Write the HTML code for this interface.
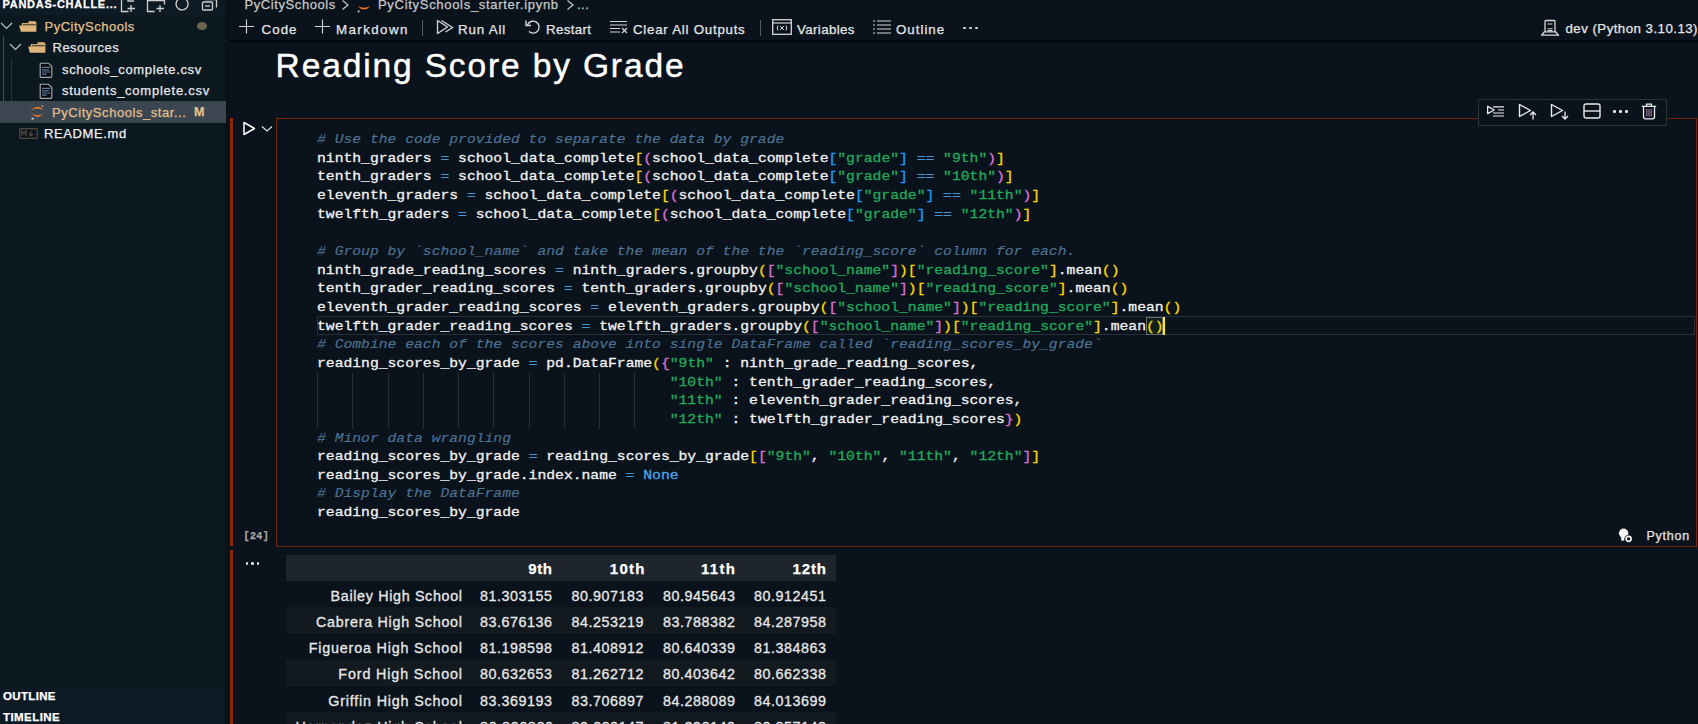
<!DOCTYPE html>
<html><head><meta charset="utf-8"><style>
html,body{margin:0;padding:0;width:1698px;height:724px;overflow:hidden;background:#0a131b;}
.code{font-family:'Liberation Mono', monospace;font-size:13.5px;line-height:18.65px;color:#f2f2f2;white-space:pre;transform:scaleX(1.08840);transform-origin:0 0;-webkit-text-stroke:0.3px currentColor}
.i{color:#f2f2f2}.o{color:#4a94d2}.s{color:#21aa5c}.c{color:#4f7597}.b1{color:#ffd700}.b2{color:#da70d6}.b3{color:#179fff}.k{color:#4aa3e8}
.c{font-style:italic;-webkit-text-stroke:0.1px currentColor}
</style></head><body>
<div style="position:absolute;left:0px;top:0px;width:225px;height:724px;background:#0c1820"></div>
<div style="position:absolute;left:225px;top:0px;width:5px;height:724px;background:#09121a"></div>
<div style="position:absolute;left:0px;top:0px;width:225px;height:14.5px;background:#0e1a24"></div>
<div id="t0" style="position:absolute;left:2.50px;top:-1.71px;font:700 11px/13.2px 'Liberation Sans', sans-serif;color:#ffffff;white-space:pre;-webkit-text-stroke:0.25px currentColor;letter-spacing:0.733px;">PANDAS-CHALLE...</div>
<svg style="position:absolute;left:120px;top:-4px;" width="18" height="17" viewBox="0 0 18 17" fill="none"><path d="M1.5 3v12.5h7" stroke="#d0d0d0" stroke-width="1.3"/><path d="M11 9v7M7.5 12.5h7.5" stroke="#d0d0d0" stroke-width="1.3"/><path d="M8 1v4h6" stroke="#d0d0d0" stroke-width="1.3"/></svg>
<svg style="position:absolute;left:146px;top:-4px;" width="20" height="17" viewBox="0 0 20 17" fill="none"><path d="M1.5 2v13.5h7" stroke="#d0d0d0" stroke-width="1.3"/><path d="M1.5 4.5h17v4" stroke="#d0d0d0" stroke-width="1.3"/><path d="M14 9v7M10.5 12.5h7.5" stroke="#d0d0d0" stroke-width="1.3"/></svg>
<svg style="position:absolute;left:174px;top:-5px;" width="17" height="16" viewBox="0 0 17 16" fill="none"><path d="M4 4.5 A6 6 0 1 0 9 3" stroke="#d0d0d0" stroke-width="1.3"/><path d="M9 0v4h4" stroke="#d0d0d0" stroke-width="1.3"/></svg>
<svg style="position:absolute;left:201px;top:-5px;" width="18" height="16" viewBox="0 0 18 16" fill="none"><rect x="1.5" y="7" width="10" height="8" rx="1" stroke="#d0d0d0" stroke-width="1.3"/><path d="M4.5 4.5h11v8" stroke="#d0d0d0" stroke-width="1.3"/><path d="M4 11h5" stroke="#d0d0d0" stroke-width="1.3"/></svg>
<svg style="position:absolute;left:0px;top:22px;" width="13" height="8" viewBox="0 0 13 8" fill="none"><path d="M1 1l5.5 5.5L12 1" stroke="#bcc4cc" stroke-width="1.15"/></svg>
<svg style="position:absolute;left:19px;top:21px;" width="18" height="11" viewBox="0 0 18 11" fill="none"><path d="M9.5 0.2h6.3q1.5 0 1.5 1.5v2.3h-7.8z" fill="#dcb67a"/><path d="M2.8 2h14.5v2.5H2.8z" fill="#dcb67a"/><path d="M4 3.4h12.8" stroke="#4a3c28" stroke-width="0.9"/><path d="M0.2 4.4H17.4V10.8H1.8z" fill="#dcb67a"/></svg>
<div id="t1" style="position:absolute;left:44.50px;top:18.60px;font:400 13px/15.6px 'Liberation Sans', sans-serif;color:#e2c08d;white-space:pre;-webkit-text-stroke:0.25px currentColor;letter-spacing:0.500px;">PyCitySchools</div>
<div style="position:absolute;left:197px;top:22px;width:9.5px;height:8px;background:#6b6350;border-radius:50%"></div>
<div style="position:absolute;left:2.5px;top:36px;width:1px;height:86.5px;background:#4b5057"></div>
<svg style="position:absolute;left:9px;top:43px;" width="13" height="8" viewBox="0 0 13 8" fill="none"><path d="M1 1l5.5 5.5L12 1" stroke="#bcc4cc" stroke-width="1.15"/></svg>
<svg style="position:absolute;left:28px;top:42px;" width="18" height="11" viewBox="0 0 18 11" fill="none"><path d="M9.5 0.2h6.3q1.5 0 1.5 1.5v2.3h-7.8z" fill="#dcb67a"/><path d="M2.8 2h14.5v2.5H2.8z" fill="#dcb67a"/><path d="M4 3.4h12.8" stroke="#4a3c28" stroke-width="0.9"/><path d="M0.2 4.4H17.4V10.8H1.8z" fill="#dcb67a"/></svg>
<div id="t2" style="position:absolute;left:52.50px;top:40.30px;font:400 13px/15.6px 'Liberation Sans', sans-serif;color:#e4e4e4;white-space:pre;-webkit-text-stroke:0.25px currentColor;letter-spacing:0.500px;">Resources</div>
<div style="position:absolute;left:11px;top:58px;width:1px;height:43px;background:#2b3440"></div>
<svg style="position:absolute;left:38.5px;top:61.5px;" width="15" height="16" viewBox="0 0 15 16" fill="none"><path d="M1.2 2.2q0-1 1-1h7.3l3.3 3.3v9.8q0 1-1 1H2.2q-1 0-1-1z" stroke="#a4a8ac" stroke-width="1.15" fill="#05080c"/><path d="M3 5.3h8.3M3 7.9h7.2M3 10h8.3M3 12.2h4.8" stroke="#5a7898" stroke-width="1.2"/></svg>
<div id="t3" style="position:absolute;left:62.00px;top:61.90px;font:400 13px/15.6px 'Liberation Sans', sans-serif;color:#e8e8e8;white-space:pre;-webkit-text-stroke:0.25px currentColor;letter-spacing:0.632px;">schools_complete.csv</div>
<svg style="position:absolute;left:38.5px;top:83.0px;" width="15" height="16" viewBox="0 0 15 16" fill="none"><path d="M1.2 2.2q0-1 1-1h7.3l3.3 3.3v9.8q0 1-1 1H2.2q-1 0-1-1z" stroke="#a4a8ac" stroke-width="1.15" fill="#05080c"/><path d="M3 5.3h8.3M3 7.9h7.2M3 10h8.3M3 12.2h4.8" stroke="#5a7898" stroke-width="1.2"/></svg>
<div id="t4" style="position:absolute;left:62.00px;top:83.40px;font:400 13px/15.6px 'Liberation Sans', sans-serif;color:#e8e8e8;white-space:pre;-webkit-text-stroke:0.25px currentColor;letter-spacing:0.750px;">students_complete.csv</div>
<div style="position:absolute;left:0px;top:101px;width:225.5px;height:21.5px;background:#3b4651"></div>
<svg style="position:absolute;left:30px;top:102px;" width="15" height="19" viewBox="0 0 15 19" fill="none"><path d="M1.5 8.2Q7.5 1.5 13.5 8.2Q7.5 4.8 1.5 8.2Z" fill="#f37726"/><path d="M1.5 11.6Q7.5 18.3 13.5 11.6Q7.5 15 1.5 11.6Z" fill="#f37726"/><circle cx="2.6" cy="16.6" r="1.2" fill="#c0c0c0"/><circle cx="12.4" cy="3.9" r="1" fill="#9a9a9a"/><circle cx="1.2" cy="5.2" r="0.6" fill="#707070"/></svg>
<div id="t5" style="position:absolute;left:52.00px;top:104.90px;font:400 13px/15.6px 'Liberation Sans', sans-serif;color:#e2c08d;white-space:pre;-webkit-text-stroke:0.25px currentColor;letter-spacing:0.550px;">PyCitySchools_star...</div>
<div id="t6" style="position:absolute;left:194.00px;top:105.37px;font:700 12.5px/15.0px 'Liberation Sans', sans-serif;color:#e2c08d;white-space:pre;-webkit-text-stroke:0.25px currentColor;">M</div>
<svg style="position:absolute;left:19px;top:128px;" width="19" height="11" viewBox="0 0 19 11" fill="none"><rect x="0.7" y="0.7" width="17.6" height="9.6" rx="1" stroke="#54483a" stroke-width="1.2"/><path d="M3 8V3l2 2.5L7 3v5M12 3v5M10 6l2 2 2-2" stroke="#54483a" stroke-width="1.2"/></svg>
<div id="t7" style="position:absolute;left:44.00px;top:126.30px;font:400 13px/15.6px 'Liberation Sans', sans-serif;color:#f0f0f0;white-space:pre;-webkit-text-stroke:0.25px currentColor;letter-spacing:0.625px;">README.md</div>
<div style="position:absolute;left:0px;top:685px;width:225px;height:39px;background:#0d1a24"></div>
<div id="t8" style="position:absolute;left:3.00px;top:689.52px;font:700 11.5px/13.8px 'Liberation Sans', sans-serif;color:#ffffff;white-space:pre;-webkit-text-stroke:0.25px currentColor;letter-spacing:0.333px;">OUTLINE</div>
<div id="t9" style="position:absolute;left:3.00px;top:711.12px;font:700 11.5px/13.8px 'Liberation Sans', sans-serif;color:#ffffff;white-space:pre;-webkit-text-stroke:0.25px currentColor;letter-spacing:0.429px;">TIMELINE</div>
<div style="position:absolute;left:230px;top:0px;width:1468px;height:724px;background:#0a131b"></div>
<div id="t10" style="position:absolute;left:244.50px;top:-2.90px;font:400 13px/15.6px 'Liberation Sans', sans-serif;color:#c8c8c8;white-space:pre;-webkit-text-stroke:0.25px currentColor;letter-spacing:0.583px;">PyCitySchools</div>
<svg style="position:absolute;left:341px;top:-2px;" width="9" height="13" viewBox="0 0 9 13" fill="none"><path d="M1.5 2.5l5.5 4.5-5.5 4.5" stroke="#c8c8c8" stroke-width="1.2"/></svg>
<svg style="position:absolute;left:355.5px;top:-2.5px;" width="16" height="16" viewBox="0 0 16 16" fill="none"><path d="M1.5 1.5Q8 -5.5 14.5 1.5Q8 -1.8 1.5 1.5Z" fill="#f37726"/><path d="M1.5 8Q8 15.2 14.5 8Q8 11.6 1.5 8Z" fill="#f37726"/><circle cx="2.6" cy="13.4" r="1.1" fill="#b8b8b8"/></svg>
<div id="t11" style="position:absolute;left:378.00px;top:-2.90px;font:400 13px/15.6px 'Liberation Sans', sans-serif;color:#c8c8c8;white-space:pre;-webkit-text-stroke:0.25px currentColor;letter-spacing:0.700px;">PyCitySchools_starter.ipynb</div>
<svg style="position:absolute;left:566px;top:-2px;" width="9" height="13" viewBox="0 0 9 13" fill="none"><path d="M1.5 2.5l5.5 4.5-5.5 4.5" stroke="#c8c8c8" stroke-width="1.2"/></svg>
<div id="t12" style="position:absolute;left:577.00px;top:-2.90px;font:400 13px/15.6px 'Liberation Sans', sans-serif;color:#c8c8c8;white-space:pre;-webkit-text-stroke:0.25px currentColor;letter-spacing:0.500px;">...</div>
<svg style="position:absolute;left:238px;top:19px;" width="17" height="15" viewBox="0 0 17 15" fill="none"><path d="M8.5 0.5v14M1 7.5h15" stroke="#d8d8d8" stroke-width="1.1"/></svg>
<div id="t13" style="position:absolute;left:261.50px;top:21.61px;font:400 13.3px/15.96px 'Liberation Sans', sans-serif;color:#e6e6e6;white-space:pre;-webkit-text-stroke:0.25px currentColor;letter-spacing:1.067px;">Code</div>
<svg style="position:absolute;left:314px;top:19px;" width="17" height="15" viewBox="0 0 17 15" fill="none"><path d="M8.5 0.5v14M1 7.5h15" stroke="#d8d8d8" stroke-width="1.1"/></svg>
<div id="t14" style="position:absolute;left:336.00px;top:21.61px;font:400 13.3px/15.96px 'Liberation Sans', sans-serif;color:#e6e6e6;white-space:pre;-webkit-text-stroke:0.25px currentColor;letter-spacing:1.429px;">Markdown</div>
<div style="position:absolute;left:422px;top:20px;width:1px;height:16px;background:#555a60"></div>
<svg style="position:absolute;left:436px;top:19px;" width="18" height="16" viewBox="0 0 18 16" fill="none"><path d="M1.5 1.5v13l10-6.5z" stroke="#d8d8d8" stroke-width="1.3" stroke-linejoin="round"/><path d="M5.5 1.5l11 7-7 4.5" stroke="#d8d8d8" stroke-width="1.3"/></svg>
<div id="t15" style="position:absolute;left:458.00px;top:21.61px;font:400 13.3px/15.96px 'Liberation Sans', sans-serif;color:#e6e6e6;white-space:pre;-webkit-text-stroke:0.25px currentColor;letter-spacing:0.833px;">Run All</div>
<svg style="position:absolute;left:524px;top:19px;" width="17" height="16" viewBox="0 0 17 16" fill="none"><path d="M3.5 6 A6 6 0 1 1 5 12.5" stroke="#d8d8d8" stroke-width="1.4"/><path d="M2 1.5v5h5" stroke="#d8d8d8" stroke-width="1.4"/></svg>
<div id="t16" style="position:absolute;left:546.00px;top:21.61px;font:400 13.3px/15.96px 'Liberation Sans', sans-serif;color:#e6e6e6;white-space:pre;-webkit-text-stroke:0.25px currentColor;letter-spacing:0.333px;">Restart</div>
<svg style="position:absolute;left:610px;top:20px;" width="18" height="15" viewBox="0 0 18 15" fill="none"><path d="M0 1.5h17M0 5h17M0 8.5h10M0 12h10" stroke="#d8d8d8" stroke-width="1.2"/><path d="M12 8l5 5M17 8l-5 5" stroke="#d8d8d8" stroke-width="1.2"/></svg>
<div id="t17" style="position:absolute;left:633.00px;top:21.61px;font:400 13.3px/15.96px 'Liberation Sans', sans-serif;color:#e6e6e6;white-space:pre;-webkit-text-stroke:0.25px currentColor;letter-spacing:0.750px;">Clear All Outputs</div>
<div style="position:absolute;left:760px;top:20px;width:1px;height:16px;background:#555a60"></div>
<svg style="position:absolute;left:772px;top:19px;" width="20" height="16" viewBox="0 0 20 16" fill="none"><rect x="0.7" y="0.7" width="18.6" height="14.6" stroke="#d8d8d8" stroke-width="1.3"/><path d="M0.7 4h18.6" stroke="#d8d8d8" stroke-width="1.2"/><path d="M6 6.5q-1.5 2.5 0 5M14 6.5q1.5 2.5 0 5M8 7l4 4M12 7l-4 4" stroke="#d8d8d8" stroke-width="1"/></svg>
<div id="t18" style="position:absolute;left:797.00px;top:21.61px;font:400 13.3px/15.96px 'Liberation Sans', sans-serif;color:#e6e6e6;white-space:pre;-webkit-text-stroke:0.25px currentColor;letter-spacing:0.375px;">Variables</div>
<svg style="position:absolute;left:873px;top:19px;" width="18" height="16" viewBox="0 0 18 16" fill="none"><path d="M0 2h2M0 6h2M0 10h2M0 14h2M4 2h14M4 6h14M4 10h14M4 14h14" stroke="#d8d8d8" stroke-width="1.2"/></svg>
<div id="t19" style="position:absolute;left:896.00px;top:21.61px;font:400 13.3px/15.96px 'Liberation Sans', sans-serif;color:#e6e6e6;white-space:pre;-webkit-text-stroke:0.25px currentColor;letter-spacing:1.000px;">Outline</div>
<div style="position:absolute;left:963px;top:26.5px;width:2.5px;height:2.5px;background:#d8d8d8;border-radius:50%"></div>
<div style="position:absolute;left:969px;top:26.5px;width:2.5px;height:2.5px;background:#d8d8d8;border-radius:50%"></div>
<div style="position:absolute;left:975px;top:26.5px;width:2.5px;height:2.5px;background:#d8d8d8;border-radius:50%"></div>
<svg style="position:absolute;left:1540px;top:19px;" width="20" height="17" viewBox="0 0 20 17" fill="none"><path d="M5 13V2.5q0-1 1-1h8q1 0 1 1V13" stroke="#d8d8d8" stroke-width="1.3"/><path d="M7.5 5h5M7.5 9.8h5M7.5 11.6h5" stroke="#d8d8d8" stroke-width="1.1"/><path d="M4.5 12.8L1.5 16.2H18.5L15.5 12.8z" stroke="#d8d8d8" stroke-width="1.3" stroke-linejoin="round"/></svg>
<div id="t20" style="position:absolute;left:1565.50px;top:20.71px;font:400 13.3px/15.96px 'Liberation Sans', sans-serif;color:#e6e6e6;white-space:pre;-webkit-text-stroke:0.25px currentColor;letter-spacing:0.45px">dev (Python 3.10.13)</div>
<div style="position:absolute;left:230px;top:40px;width:1468px;height:2px;background:#04080c"></div>
<div id="t21" style="position:absolute;left:275.60px;top:46.19px;font:400 33.5px/40.2px 'Liberation Sans', sans-serif;color:#ffffff;white-space:pre;-webkit-text-stroke:0.45px currentColor;letter-spacing:1.867px;">Reading Score by Grade</div>
<div style="position:absolute;left:230px;top:118px;width:3px;height:428px;background:#8c2700"></div>
<div style="position:absolute;left:230px;top:550px;width:3px;height:174px;background:#8c2700"></div>
<div style="position:absolute;left:276px;top:118px;width:1420.5px;height:429px;border:1px solid #742606;box-sizing:border-box"></div>
<svg style="position:absolute;left:242px;top:121px;" width="15" height="15" viewBox="0 0 15 15" fill="none"><path d="M2 1.5v12l10.5-6z" stroke="#ffffff" stroke-width="1.5" stroke-linejoin="round"/></svg>
<svg style="position:absolute;left:261px;top:125px;" width="12" height="8" viewBox="0 0 12 8" fill="none"><path d="M1 1.5l5 4.5 5-4.5" stroke="#e0e0e0" stroke-width="1.2"/></svg>
<div style="position:absolute;left:1478px;top:99px;width:188.5px;height:27px;background:#0a131b;border:1px solid #2c3238;box-sizing:border-box"></div>
<svg style="position:absolute;left:1486px;top:104px;" width="19" height="14" viewBox="0 0 19 14" fill="none"><path d="M1.6 2.4v7.2l6.6-3.6z" stroke="#ececec" stroke-width="1.25" stroke-linejoin="round"/><path d="M7 2.8h11M12 6h6M7 9h11M7 12h11" stroke="#ececec" stroke-width="1.2"/></svg>
<svg style="position:absolute;left:1518px;top:103px;" width="20" height="17" viewBox="0 0 20 17" fill="none"><path d="M1.5 1.5v12l11-6z" stroke="#ececec" stroke-width="1.4" stroke-linejoin="round"/><path d="M15 16.5v-7M12 12l3-3 3 3" stroke="#ececec" stroke-width="1.3"/></svg>
<svg style="position:absolute;left:1550px;top:103px;" width="20" height="17" viewBox="0 0 20 17" fill="none"><path d="M1.5 1.5v12l11-6z" stroke="#ececec" stroke-width="1.4" stroke-linejoin="round"/><path d="M15 8.5v7M12 13l3 3 3-3" stroke="#ececec" stroke-width="1.3"/></svg>
<svg style="position:absolute;left:1583px;top:103px;" width="18" height="16" viewBox="0 0 18 16" fill="none"><rect x="1" y="1" width="16" height="14" rx="2" stroke="#ececec" stroke-width="1.4"/><path d="M1 8h16" stroke="#ececec" stroke-width="1.4"/></svg>
<div style="position:absolute;left:1613px;top:110px;width:2.5px;height:2.5px;background:#ececec;border-radius:50%"></div>
<div style="position:absolute;left:1619px;top:110px;width:2.5px;height:2.5px;background:#ececec;border-radius:50%"></div>
<div style="position:absolute;left:1625px;top:110px;width:2.5px;height:2.5px;background:#ececec;border-radius:50%"></div>
<svg style="position:absolute;left:1641px;top:103px;" width="16" height="17" viewBox="0 0 16 17" fill="none"><path d="M0.8 3.3h14.4M5.5 3V1.2h5V3" stroke="#ececec" stroke-width="1.3"/><path d="M2.5 3.8v10q0 2 2 2h7q2 0 2-2v-10" stroke="#ececec" stroke-width="1.3"/><path d="M5.8 6v7.5M8 6v7.5M10.2 6v7.5" stroke="#c89ad0" stroke-width="0.9"/></svg>
<div style="position:absolute;left:317px;top:316px;width:1378px;height:18.5px;border:1px solid #25303a;box-sizing:border-box"></div>
<div style="position:absolute;left:317px;top:373.45px;width:1px;height:55.949999999999996px;background:#282d33"></div>
<div style="position:absolute;left:352px;top:373.45px;width:1px;height:55.949999999999996px;background:#282d33"></div>
<div style="position:absolute;left:388px;top:373.45px;width:1px;height:55.949999999999996px;background:#282d33"></div>
<div style="position:absolute;left:423px;top:373.45px;width:1px;height:55.949999999999996px;background:#282d33"></div>
<div style="position:absolute;left:458px;top:373.45px;width:1px;height:55.949999999999996px;background:#282d33"></div>
<div style="position:absolute;left:493px;top:373.45px;width:1px;height:55.949999999999996px;background:#282d33"></div>
<div style="position:absolute;left:529px;top:373.45px;width:1px;height:55.949999999999996px;background:#282d33"></div>
<div style="position:absolute;left:564px;top:373.45px;width:1px;height:55.949999999999996px;background:#282d33"></div>
<div style="position:absolute;left:599px;top:373.45px;width:1px;height:55.949999999999996px;background:#282d33"></div>
<div style="position:absolute;left:634px;top:373.45px;width:1px;height:55.949999999999996px;background:#282d33"></div>
<div style="position:absolute;left:1145.7040000000002px;top:316.5px;width:17.632px;height:18px;border:1px solid #6b6b6b;background:#0c2118;box-sizing:border-box"></div>
<div style="position:absolute;left:1162.836px;top:316.5px;width:2px;height:18px;background:#fff200"></div>
<pre class="code" style="position:absolute;left:317px;top:131px;margin:0"><span class="c"># Use the code provided to separate the data by grade</span>
<span class="i">ninth_graders</span><span class="o"> = </span><span class="i">school_data_complete</span><span class="b1">[</span><span class="b2">(</span><span class="i">school_data_complete</span><span class="b3">[</span><span class="s">&quot;grade&quot;</span><span class="b3">]</span><span class="o"> == </span><span class="s">&quot;9th&quot;</span><span class="b2">)</span><span class="b1">]</span>
<span class="i">tenth_graders</span><span class="o"> = </span><span class="i">school_data_complete</span><span class="b1">[</span><span class="b2">(</span><span class="i">school_data_complete</span><span class="b3">[</span><span class="s">&quot;grade&quot;</span><span class="b3">]</span><span class="o"> == </span><span class="s">&quot;10th&quot;</span><span class="b2">)</span><span class="b1">]</span>
<span class="i">eleventh_graders</span><span class="o"> = </span><span class="i">school_data_complete</span><span class="b1">[</span><span class="b2">(</span><span class="i">school_data_complete</span><span class="b3">[</span><span class="s">&quot;grade&quot;</span><span class="b3">]</span><span class="o"> == </span><span class="s">&quot;11th&quot;</span><span class="b2">)</span><span class="b1">]</span>
<span class="i">twelfth_graders</span><span class="o"> = </span><span class="i">school_data_complete</span><span class="b1">[</span><span class="b2">(</span><span class="i">school_data_complete</span><span class="b3">[</span><span class="s">&quot;grade&quot;</span><span class="b3">]</span><span class="o"> == </span><span class="s">&quot;12th&quot;</span><span class="b2">)</span><span class="b1">]</span>

<span class="c"># Group by `school_name` and take the mean of the the `reading_score` column for each.</span>
<span class="i">ninth_grade_reading_scores</span><span class="o"> = </span><span class="i">ninth_graders.groupby</span><span class="b1">(</span><span class="b2">[</span><span class="s">&quot;school_name&quot;</span><span class="b2">]</span><span class="b1">)</span><span class="b1">[</span><span class="s">&quot;reading_score&quot;</span><span class="b1">]</span><span class="i">.mean</span><span class="b1">()</span>
<span class="i">tenth_grader_reading_scores</span><span class="o"> = </span><span class="i">tenth_graders.groupby</span><span class="b1">(</span><span class="b2">[</span><span class="s">&quot;school_name&quot;</span><span class="b2">]</span><span class="b1">)</span><span class="b1">[</span><span class="s">&quot;reading_score&quot;</span><span class="b1">]</span><span class="i">.mean</span><span class="b1">()</span>
<span class="i">eleventh_grader_reading_scores</span><span class="o"> = </span><span class="i">eleventh_graders.groupby</span><span class="b1">(</span><span class="b2">[</span><span class="s">&quot;school_name&quot;</span><span class="b2">]</span><span class="b1">)</span><span class="b1">[</span><span class="s">&quot;reading_score&quot;</span><span class="b1">]</span><span class="i">.mean</span><span class="b1">()</span>
<span class="i">twelfth_grader_reading_scores</span><span class="o"> = </span><span class="i">twelfth_graders.groupby</span><span class="b1">(</span><span class="b2">[</span><span class="s">&quot;school_name&quot;</span><span class="b2">]</span><span class="b1">)</span><span class="b1">[</span><span class="s">&quot;reading_score&quot;</span><span class="b1">]</span><span class="i">.mean</span><span class="b1">()</span>
<span class="c"># Combine each of the scores above into single DataFrame called `reading_scores_by_grade`</span>
<span class="i">reading_scores_by_grade</span><span class="o"> = </span><span class="i">pd.DataFrame</span><span class="b1">(</span><span class="b2">{</span><span class="s">&quot;9th&quot;</span><span class="i"> : ninth_grade_reading_scores,</span>
<span class="i">                                        </span><span class="s">&quot;10th&quot;</span><span class="i"> : tenth_grader_reading_scores,</span>
<span class="i">                                        </span><span class="s">&quot;11th&quot;</span><span class="i"> : eleventh_grader_reading_scores,</span>
<span class="i">                                        </span><span class="s">&quot;12th&quot;</span><span class="i"> : twelfth_grader_reading_scores</span><span class="b2">}</span><span class="b1">)</span>
<span class="c"># Minor data wrangling</span>
<span class="i">reading_scores_by_grade</span><span class="o"> = </span><span class="i">reading_scores_by_grade</span><span class="b1">[</span><span class="b2">[</span><span class="s">&quot;9th&quot;</span><span class="i">, </span><span class="s">&quot;10th&quot;</span><span class="i">, </span><span class="s">&quot;11th&quot;</span><span class="i">, </span><span class="s">&quot;12th&quot;</span><span class="b2">]</span><span class="b1">]</span>
<span class="i">reading_scores_by_grade.index.name</span><span class="o"> = </span><span class="k">None</span>
<span class="c"># Display the DataFrame</span>
<span class="i">reading_scores_by_grade</span></pre>
<div id="t22" style="position:absolute;left:243.50px;top:531.13px;font:700 10px/12.0px 'Liberation Mono', monospace;color:#a8a8a8;white-space:pre;-webkit-text-stroke:0.25px currentColor;letter-spacing:0.400px;">[24]</div>
<svg style="position:absolute;left:1618px;top:528px;" width="15" height="15" viewBox="0 0 15 15" fill="none"><circle cx="5.6" cy="5.3" r="4.7" fill="#f2f2f2"/><rect x="3.2" y="8" width="3.2" height="4.6" fill="#f2f2f2"/><circle cx="10.6" cy="10.8" r="3.9" fill="#0a131a"/><circle cx="10.6" cy="10.8" r="2.5" stroke="#f2f2f2" stroke-width="1.7"/></svg>
<div id="t23" style="position:absolute;left:1646.50px;top:528.97px;font:400 12.5px/15.0px 'Liberation Sans', sans-serif;color:#e4e4e4;white-space:pre;-webkit-text-stroke:0.25px currentColor;letter-spacing:0.760px;">Python</div>
<div style="position:absolute;left:245.5px;top:562.3px;width:2.6px;height:2.6px;background:#e8e8e8;border-radius:50%"></div>
<div style="position:absolute;left:251.0px;top:562.3px;width:2.6px;height:2.6px;background:#e8e8e8;border-radius:50%"></div>
<div style="position:absolute;left:256.5px;top:562.3px;width:2.6px;height:2.6px;background:#e8e8e8;border-radius:50%"></div>
<div style="position:absolute;left:286px;top:555px;width:549.5px;height:26px;background:#1f252c"></div>
<div style="position:absolute;left:252.00px;width:300px;text-align:right;top:559.80px;"><span id="t24" style="font:700 15px/18.0px 'Liberation Sans', sans-serif;color:#ffffff;white-space:pre;-webkit-text-stroke:0.25px currentColor;letter-spacing:0.600px;margin-right:-0.600px;">9th</span></div>
<div style="position:absolute;left:344.50px;width:300px;text-align:right;top:559.80px;"><span id="t25" style="font:700 15px/18.0px 'Liberation Sans', sans-serif;color:#ffffff;white-space:pre;-webkit-text-stroke:0.25px currentColor;letter-spacing:1.267px;margin-right:-1.267px;">10th</span></div>
<div style="position:absolute;left:435.00px;width:300px;text-align:right;top:559.80px;"><span id="t26" style="font:700 15px/18.0px 'Liberation Sans', sans-serif;color:#ffffff;white-space:pre;-webkit-text-stroke:0.25px currentColor;letter-spacing:1.333px;margin-right:-1.333px;">11th</span></div>
<div style="position:absolute;left:526.00px;width:300px;text-align:right;top:559.80px;"><span id="t27" style="font:700 15px/18.0px 'Liberation Sans', sans-serif;color:#ffffff;white-space:pre;-webkit-text-stroke:0.25px currentColor;letter-spacing:0.867px;margin-right:-0.867px;">12th</span></div>
<div style="position:absolute;left:162.00px;width:300px;text-align:right;top:586.87px;"><span id="t28" style="font:400 14.3px/17.16px 'Liberation Sans', sans-serif;color:#e8e8e8;white-space:pre;-webkit-text-stroke:0.3px currentColor;letter-spacing:0.671px;margin-right:-0.671px;">Bailey High School</span></div>
<div style="position:absolute;left:252.00px;width:300px;text-align:right;top:586.87px;"><span id="t29" style="font:400 14.3px/17.16px 'Liberation Sans', sans-serif;color:#e8e8e8;white-space:pre;-webkit-text-stroke:0.3px currentColor;letter-spacing:0.550px;margin-right:-0.550px;">81.303155</span></div>
<div style="position:absolute;left:343.50px;width:300px;text-align:right;top:586.87px;"><span id="t30" style="font:400 14.3px/17.16px 'Liberation Sans', sans-serif;color:#e8e8e8;white-space:pre;-webkit-text-stroke:0.3px currentColor;letter-spacing:0.550px;margin-right:-0.550px;">80.907183</span></div>
<div style="position:absolute;left:435.00px;width:300px;text-align:right;top:586.87px;"><span id="t31" style="font:400 14.3px/17.16px 'Liberation Sans', sans-serif;color:#e8e8e8;white-space:pre;-webkit-text-stroke:0.3px currentColor;letter-spacing:0.550px;margin-right:-0.550px;">80.945643</span></div>
<div style="position:absolute;left:526.00px;width:300px;text-align:right;top:586.87px;"><span id="t32" style="font:400 14.3px/17.16px 'Liberation Sans', sans-serif;color:#e8e8e8;white-space:pre;-webkit-text-stroke:0.3px currentColor;letter-spacing:0.550px;margin-right:-0.550px;">80.912451</span></div>
<div style="position:absolute;left:286px;top:607.25px;width:549.5px;height:26.25px;background:#12191f"></div>
<div style="position:absolute;left:162.00px;width:300px;text-align:right;top:613.07px;"><span id="t33" style="font:400 14.3px/17.16px 'Liberation Sans', sans-serif;color:#e8e8e8;white-space:pre;-webkit-text-stroke:0.3px currentColor;letter-spacing:0.733px;margin-right:-0.733px;">Cabrera High School</span></div>
<div style="position:absolute;left:252.00px;width:300px;text-align:right;top:613.07px;"><span id="t34" style="font:400 14.3px/17.16px 'Liberation Sans', sans-serif;color:#e8e8e8;white-space:pre;-webkit-text-stroke:0.3px currentColor;letter-spacing:0.550px;margin-right:-0.550px;">83.676136</span></div>
<div style="position:absolute;left:343.50px;width:300px;text-align:right;top:613.07px;"><span id="t35" style="font:400 14.3px/17.16px 'Liberation Sans', sans-serif;color:#e8e8e8;white-space:pre;-webkit-text-stroke:0.3px currentColor;letter-spacing:0.550px;margin-right:-0.550px;">84.253219</span></div>
<div style="position:absolute;left:435.00px;width:300px;text-align:right;top:613.07px;"><span id="t36" style="font:400 14.3px/17.16px 'Liberation Sans', sans-serif;color:#e8e8e8;white-space:pre;-webkit-text-stroke:0.3px currentColor;letter-spacing:0.550px;margin-right:-0.550px;">83.788382</span></div>
<div style="position:absolute;left:526.00px;width:300px;text-align:right;top:613.07px;"><span id="t37" style="font:400 14.3px/17.16px 'Liberation Sans', sans-serif;color:#e8e8e8;white-space:pre;-webkit-text-stroke:0.3px currentColor;letter-spacing:0.550px;margin-right:-0.550px;">84.287958</span></div>
<div style="position:absolute;left:162.00px;width:300px;text-align:right;top:639.27px;"><span id="t38" style="font:400 14.3px/17.16px 'Liberation Sans', sans-serif;color:#e8e8e8;white-space:pre;-webkit-text-stroke:0.3px currentColor;letter-spacing:0.832px;margin-right:-0.832px;">Figueroa High School</span></div>
<div style="position:absolute;left:252.00px;width:300px;text-align:right;top:639.27px;"><span id="t39" style="font:400 14.3px/17.16px 'Liberation Sans', sans-serif;color:#e8e8e8;white-space:pre;-webkit-text-stroke:0.3px currentColor;letter-spacing:0.550px;margin-right:-0.550px;">81.198598</span></div>
<div style="position:absolute;left:343.50px;width:300px;text-align:right;top:639.27px;"><span id="t40" style="font:400 14.3px/17.16px 'Liberation Sans', sans-serif;color:#e8e8e8;white-space:pre;-webkit-text-stroke:0.3px currentColor;letter-spacing:0.550px;margin-right:-0.550px;">81.408912</span></div>
<div style="position:absolute;left:435.00px;width:300px;text-align:right;top:639.27px;"><span id="t41" style="font:400 14.3px/17.16px 'Liberation Sans', sans-serif;color:#e8e8e8;white-space:pre;-webkit-text-stroke:0.3px currentColor;letter-spacing:0.550px;margin-right:-0.550px;">80.640339</span></div>
<div style="position:absolute;left:526.00px;width:300px;text-align:right;top:639.27px;"><span id="t42" style="font:400 14.3px/17.16px 'Liberation Sans', sans-serif;color:#e8e8e8;white-space:pre;-webkit-text-stroke:0.3px currentColor;letter-spacing:0.550px;margin-right:-0.550px;">81.384863</span></div>
<div style="position:absolute;left:286px;top:659.75px;width:549.5px;height:26.25px;background:#12191f"></div>
<div style="position:absolute;left:162.00px;width:300px;text-align:right;top:665.47px;"><span id="t43" style="font:400 14.3px/17.16px 'Liberation Sans', sans-serif;color:#e8e8e8;white-space:pre;-webkit-text-stroke:0.3px currentColor;letter-spacing:0.880px;margin-right:-0.880px;">Ford High School</span></div>
<div style="position:absolute;left:252.00px;width:300px;text-align:right;top:665.47px;"><span id="t44" style="font:400 14.3px/17.16px 'Liberation Sans', sans-serif;color:#e8e8e8;white-space:pre;-webkit-text-stroke:0.3px currentColor;letter-spacing:0.550px;margin-right:-0.550px;">80.632653</span></div>
<div style="position:absolute;left:343.50px;width:300px;text-align:right;top:665.47px;"><span id="t45" style="font:400 14.3px/17.16px 'Liberation Sans', sans-serif;color:#e8e8e8;white-space:pre;-webkit-text-stroke:0.3px currentColor;letter-spacing:0.550px;margin-right:-0.550px;">81.262712</span></div>
<div style="position:absolute;left:435.00px;width:300px;text-align:right;top:665.47px;"><span id="t46" style="font:400 14.3px/17.16px 'Liberation Sans', sans-serif;color:#e8e8e8;white-space:pre;-webkit-text-stroke:0.3px currentColor;letter-spacing:0.550px;margin-right:-0.550px;">80.403642</span></div>
<div style="position:absolute;left:526.00px;width:300px;text-align:right;top:665.47px;"><span id="t47" style="font:400 14.3px/17.16px 'Liberation Sans', sans-serif;color:#e8e8e8;white-space:pre;-webkit-text-stroke:0.3px currentColor;letter-spacing:0.550px;margin-right:-0.550px;">80.662338</span></div>
<div style="position:absolute;left:162.00px;width:300px;text-align:right;top:691.67px;"><span id="t48" style="font:400 14.3px/17.16px 'Liberation Sans', sans-serif;color:#e8e8e8;white-space:pre;-webkit-text-stroke:0.3px currentColor;letter-spacing:0.822px;margin-right:-0.822px;">Griffin High School</span></div>
<div style="position:absolute;left:252.00px;width:300px;text-align:right;top:691.67px;"><span id="t49" style="font:400 14.3px/17.16px 'Liberation Sans', sans-serif;color:#e8e8e8;white-space:pre;-webkit-text-stroke:0.3px currentColor;letter-spacing:0.550px;margin-right:-0.550px;">83.369193</span></div>
<div style="position:absolute;left:343.50px;width:300px;text-align:right;top:691.67px;"><span id="t50" style="font:400 14.3px/17.16px 'Liberation Sans', sans-serif;color:#e8e8e8;white-space:pre;-webkit-text-stroke:0.3px currentColor;letter-spacing:0.550px;margin-right:-0.550px;">83.706897</span></div>
<div style="position:absolute;left:435.00px;width:300px;text-align:right;top:691.67px;"><span id="t51" style="font:400 14.3px/17.16px 'Liberation Sans', sans-serif;color:#e8e8e8;white-space:pre;-webkit-text-stroke:0.3px currentColor;letter-spacing:0.550px;margin-right:-0.550px;">84.288089</span></div>
<div style="position:absolute;left:526.00px;width:300px;text-align:right;top:691.67px;"><span id="t52" style="font:400 14.3px/17.16px 'Liberation Sans', sans-serif;color:#e8e8e8;white-space:pre;-webkit-text-stroke:0.3px currentColor;letter-spacing:0.550px;margin-right:-0.550px;">84.013699</span></div>
<div style="position:absolute;left:286px;top:712.25px;width:549.5px;height:26.25px;background:#12191f"></div>
<div style="position:absolute;left:162.00px;width:300px;text-align:right;top:717.87px;"><span id="t53" style="font:400 14.3px/17.16px 'Liberation Sans', sans-serif;color:#e8e8e8;white-space:pre;-webkit-text-stroke:0.3px currentColor;letter-spacing:0.770px;margin-right:-0.770px;">Hernandez High School</span></div>
<div style="position:absolute;left:253.00px;width:300px;text-align:right;top:717.87px;"><span id="t54" style="font:400 14.3px/17.16px 'Liberation Sans', sans-serif;color:#e8e8e8;white-space:pre;-webkit-text-stroke:0.3px currentColor;letter-spacing:0.675px;margin-right:-0.675px;">80.866860</span></div>
<div style="position:absolute;left:343.50px;width:300px;text-align:right;top:717.87px;"><span id="t55" style="font:400 14.3px/17.16px 'Liberation Sans', sans-serif;color:#e8e8e8;white-space:pre;-webkit-text-stroke:0.3px currentColor;letter-spacing:0.550px;margin-right:-0.550px;">80.660147</span></div>
<div style="position:absolute;left:435.00px;width:300px;text-align:right;top:717.87px;"><span id="t56" style="font:400 14.3px/17.16px 'Liberation Sans', sans-serif;color:#e8e8e8;white-space:pre;-webkit-text-stroke:0.3px currentColor;letter-spacing:0.550px;margin-right:-0.550px;">81.396140</span></div>
<div style="position:absolute;left:526.00px;width:300px;text-align:right;top:717.87px;"><span id="t57" style="font:400 14.3px/17.16px 'Liberation Sans', sans-serif;color:#e8e8e8;white-space:pre;-webkit-text-stroke:0.3px currentColor;letter-spacing:0.550px;margin-right:-0.550px;">80.857143</span></div>
</body></html>
